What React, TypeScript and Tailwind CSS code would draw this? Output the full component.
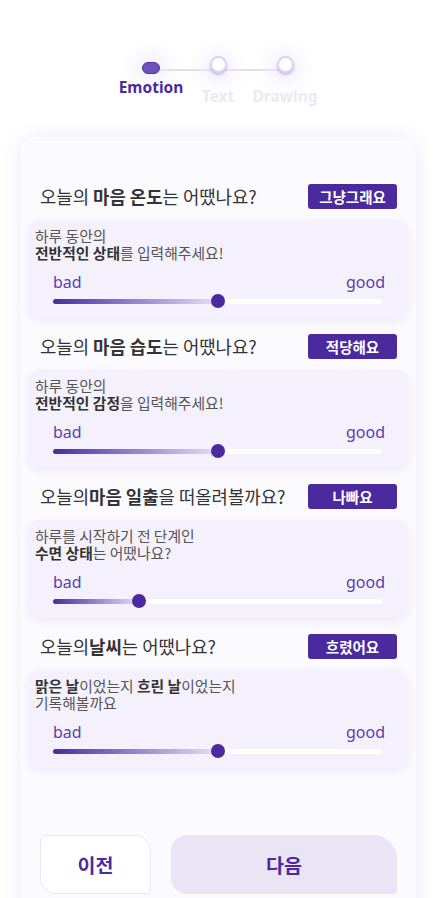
import React from "react";

type Question = {
  title: React.ReactNode;
  badge: string;
  desc: React.ReactNode;
  value: number;
};

const questions: Question[] = [
  {
    title: (
      <>
        오늘의 <b className="font-bold">마음 온도</b>는 어땠나요?
      </>
    ),
    badge: "그냥그래요",
    desc: (
      <>
        하루 동안의
        <br />
        <b className="font-bold text-[#333]">전반적인 상태</b>를 입력해주세요!
      </>
    ),
    value: 50,
  },
  {
    title: (
      <>
        오늘의 <b className="font-bold">마음 습도</b>는 어땠나요?
      </>
    ),
    badge: "적당해요",
    desc: (
      <>
        하루 동안의
        <br />
        <b className="font-bold text-[#333]">전반적인 감정</b>을 입력해주세요!
      </>
    ),
    value: 50,
  },
  {
    title: (
      <>
        오늘의<b className="font-bold">마음 일출</b>을 떠올려볼까요?
      </>
    ),
    badge: "나빠요",
    desc: (
      <>
        하루를 시작하기 전 단계인
        <br />
        <b className="font-bold text-[#333]">수면 상태</b>는 어땠나요?
      </>
    ),
    value: 26,
  },
  {
    title: (
      <>
        오늘의<b className="font-bold">날씨</b>는 어땠나요?
      </>
    ),
    badge: "흐렸어요",
    desc: (
      <>
        <b className="font-bold text-[#333]">맑은 날</b>이었는지{" "}
        <b className="font-bold text-[#333]">흐린 날</b>이었는지
        <br />
        기록해볼까요
      </>
    ),
    value: 50,
  },
];

function Stepper() {
  const steps = [
    { label: "Emotion", active: true },
    { label: "Text", active: false },
    { label: "Drawing", active: false },
  ];
  return (
    <div className="relative flex justify-center pt-[56px] h-[137px]">
      {/* connecting line */}
      <div className="absolute left-[151px] top-[69px] w-[134px] h-[2px] bg-[#e2dcf3]" />
      {steps.map((s) => (
        <div key={s.label} className="relative w-[67px] flex flex-col items-center">
          <div className="absolute top-[-18px] w-[60px] h-[60px] rounded-full bg-[radial-gradient(circle,rgba(238,234,250,0.7)_0%,rgba(255,255,255,0)_70%)]" />
          {s.active ? (
            <div className="relative mt-[6px] w-[18px] h-[12px] rounded-full bg-[#6c51bb] border border-[#4e33a0]" />
          ) : (
            <div className="relative w-[17px] h-[17px] rounded-full bg-white border-2 border-[#dcd4f2] shadow-[0_2px_3px_rgba(110,80,190,0.35)]" />
          )}
          <span
            className={
              s.active
                ? "relative mt-[3px] text-[15.5px] font-bold text-[#4b2aa0] leading-[20px] whitespace-nowrap"
                : "relative mt-[13px] text-[15.5px] font-bold text-[#ece9f6] leading-[20px] whitespace-nowrap"
            }
            style={{ fontFamily: "'Noto Sans', sans-serif" }}
          >
            {s.label}
          </span>
        </div>
      ))}
    </div>
  );
}

function Slider({ value }: { value: number }) {
  return (
    <div className="relative h-[14px] mx-[18px] flex items-center">
      <div className="w-full h-[5px] rounded-full bg-white overflow-hidden">
        <div
          className="h-full bg-gradient-to-r from-[#4a2a9e] to-[#e6e0f4]"
          style={{ width: `${value}%` }}
        />
      </div>
      <div
        className="absolute top-0 w-[14px] h-[14px] -ml-[7px] rounded-full bg-[#4b2aa0]"
        style={{ left: `${value}%` }}
      />
    </div>
  );
}

function QuestionBlock({ q }: { q: Question }) {
  return (
    <div className="mb-[16px]">
      <div className="flex items-center justify-between pl-3 pr-[11px] h-[25px]">
        <p className="text-[17.8px] text-[#333] whitespace-nowrap">{q.title}</p>
        <span className="w-[89px] h-[25px] flex items-center justify-center rounded-[3px] bg-[#4b2a9e] text-white text-[14.5px] font-bold">
          {q.badge}
        </span>
      </div>
      <div className="mt-[11px] h-[98px] rounded-xl bg-[#f4f1fd] shadow-[0_3px_8px_rgba(110,90,180,0.1)] pt-[7px] pr-2 pl-[7px]">
        <p className="text-[14.8px] leading-[17px] text-[#555] whitespace-nowrap">{q.desc}</p>
        <div
          className="flex justify-between mt-[10px] px-[18px] text-[16px] leading-[22px] text-[#5b3fab]"
          style={{ fontFamily: "'Noto Sans', sans-serif" }}
        >
          <span>bad</span>
          <span className="-mr-[3px]">good</span>
        </div>
        <div className="mt-[1px]">
          <Slider value={q.value} />
        </div>
      </div>
    </div>
  );
}

export default function App() {
  return (
    <div
      className="w-[436px] h-[898px] overflow-hidden bg-white"
      style={{ fontFamily: "'Noto Sans CJK KR', 'Noto Sans', sans-serif" }}
    >
      <Stepper />
      <div className="mx-[20px] h-[800px] rounded-t-2xl bg-[#fbfaff] shadow-[0_0_18px_rgba(120,95,200,0.14)] px-2 pt-[47px]">
        {questions.map((q, i) => (
          <QuestionBlock key={i} q={q} />
        ))}
        <div className="flex gap-5 px-[12px] pr-[11px] mt-[67px]">
          <button className="w-[111px] h-[59px] bg-white border border-[#ebe7f5] rounded-tl-md rounded-tr-2xl rounded-bl-2xl rounded-br-sm text-[19.5px] font-bold text-[#4b2aa0]">
            이전
          </button>
          <button className="flex-1 h-[59px] bg-[#e9e5f4] rounded-tl-2xl rounded-tr-3xl rounded-bl-2xl rounded-br-sm text-[19.5px] font-semibold text-[#4b2aa0]">
            다음
          </button>
        </div>
      </div>
    </div>
  );
}
